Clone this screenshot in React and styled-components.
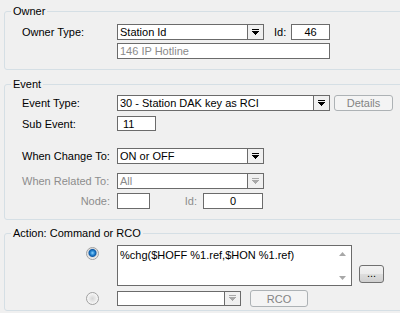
import React from "react";
import styled, { createGlobalStyle } from "styled-components";

const GlobalStyle = createGlobalStyle`
  html, body {
    margin: 0;
    padding: 0;
    background: #f0f0f0;
    overflow: hidden;
  }
  body {
    font-family: "Liberation Sans", Arial, sans-serif;
    font-size: 11px;
    color: #000;
  }
`;

const Page = styled.div`
  width: 400px;
  height: 313px;
  overflow: hidden;
  padding: 4px 0 0 4px;
  box-sizing: border-box;
  display: flex;
  flex-direction: column;
`;

const Group = styled.fieldset`
  margin: ${(p) => p.$top || 0}px 0 0 0;
  padding: 0;
  border: 1px solid #d5dfe5;
  border-radius: 3px;
  width: 430px;
  box-sizing: border-box;
  min-width: 0;
  flex: none;
`;

const Legend = styled.legend`
  margin-left: 6px;
  padding: 0 2px;
  height: 14px;
  line-height: 14px;
`;

const Body = styled.div`
  padding: ${(p) => p.$pad};
  display: flex;
  flex-direction: column;
`;

const Row = styled.div`
  display: flex;
  align-items: ${(p) => p.$align || "center"};
  height: ${(p) => p.$h || 16}px;
  margin-top: ${(p) => p.$mt || 0}px;
`;

const Label = styled.div`
  width: 95px;
  flex: none;
  box-sizing: border-box;
  color: ${(p) => (p.$disabled ? "#8d8d8d" : "#000")};
  text-align: ${(p) => (p.$right ? "right" : "left")};
  padding-right: ${(p) => (p.$right ? 7 : 0)}px;
  white-space: nowrap;
`;

const InlineLabel = styled.div`
  width: ${(p) => p.$w}px;
  flex: none;
  box-sizing: border-box;
  padding-left: ${(p) => p.$pl || 0}px;
  padding-right: ${(p) => p.$pr || 0}px;
  text-align: ${(p) => (p.$right ? "right" : "left")};
  color: ${(p) => (p.$disabled ? "#8d8d8d" : "#000")};
  white-space: nowrap;
`;

const TextBox = styled.div`
  width: ${(p) => p.$w}px;
  height: ${(p) => p.$h || 16}px;
  flex: none;
  box-sizing: border-box;
  border: 1px solid #6b6b6b;
  background: #fff;
  padding: 0 ${(p) => (p.$center ? 0 : 2)}px;
  display: flex;
  align-items: center;
  justify-content: ${(p) => (p.$center ? "center" : "flex-start")};
  color: ${(p) => (p.$disabled ? "#8a8a8a" : "#000")};
  white-space: nowrap;
  overflow: hidden;
`;

const Combo = styled.div`
  width: ${(p) => p.$w}px;
  height: ${(p) => p.$h || 16}px;
  flex: none;
  box-sizing: border-box;
  border: 1px solid #6b6b6b;
  background: #fff;
  display: flex;
`;

const ComboText = styled.div`
  flex: 1;
  padding-left: 2px;
  display: flex;
  align-items: center;
  color: ${(p) => (p.$disabled ? "#8a8a8a" : "#000")};
  white-space: nowrap;
  overflow: hidden;
`;

const ComboButton = styled.div`
  width: 15px;
  flex: none;
  border-left: 1px solid #6b6b6b;
  background: #f0f0f0;
  display: flex;
  align-items: center;
  justify-content: center;
`;

const PushButton = styled.div`
  width: ${(p) => p.$w}px;
  height: ${(p) => p.$h || 16}px;
  flex: none;
  box-sizing: border-box;
  margin-left: ${(p) => p.$ml || 0}px;
  border: 1px solid #adb2b5;
  border-radius: 3px;
  background: #f4f4f4;
  color: #838383;
  display: flex;
  align-items: center;
  justify-content: center;
`;

const DotsButton = styled.div`
  width: 25px;
  height: 18px;
  flex: none;
  box-sizing: border-box;
  margin: 0 0 3px 7px;
  align-self: flex-end;
  border: 1px solid #707070;
  border-radius: 3px;
  background: linear-gradient(#f2f2f2 0%, #ebebeb 50%, #dddddd 51%, #cfcfcf 100%);
  display: flex;
  align-items: center;
  justify-content: center;
  padding-bottom: 3px;
`;

const RadioCell = styled.div`
  width: 95px;
  flex: none;
  display: flex;
  justify-content: flex-end;
  padding-right: 18px;
  padding-top: ${(p) => p.$pt || 0}px;
  box-sizing: border-box;
`;

const Radio = styled.div`
  width: 13px;
  height: 13px;
  box-sizing: border-box;
  border-radius: 50%;
  border: 1px solid #a0a0a0;
  background: ${(p) =>
    p.$checked
      ? "radial-gradient(circle at 50% 45%, #8fd3ff 0, #2a8ad4 2px, #0d5aa8 3.5px, #dcdcdc 4.5px, #f4f4f4 6px)"
      : "radial-gradient(circle, #d6d6d6 0, #eeeeee 4px, #fbfbfb 6px)"};
`;

const Memo = styled.div`
  width: 235px;
  height: 41px;
  flex: none;
  box-sizing: border-box;
  border: 1px solid #6b6b6b;
  background: #fff;
  display: flex;
`;

const MemoText = styled.div`
  flex: 1;
  padding: 3px 0 0 2px;
  white-space: nowrap;
  overflow: hidden;
`;

const ScrollBar = styled.div`
  width: 17px;
  flex: none;
  display: flex;
  flex-direction: column;
  justify-content: space-between;
  align-items: center;
  padding: 6px 0 5px;
  box-sizing: border-box;
  background: #fff;
`;

function DownArrow({ color = "#000" }) {
  return (
    <svg width="7" height="7" viewBox="0 0 7 7" shapeRendering="crispEdges">
      <rect x="0" y="0" width="7" height="1" fill={color} />
      <rect x="0" y="2" width="7" height="1" fill={color} />
      <rect x="1" y="3" width="5" height="1" fill={color} />
      <rect x="2" y="4" width="3" height="1" fill={color} />
      <rect x="3" y="5" width="1" height="1" fill={color} />
    </svg>
  );
}

function SmallArrow({ up }) {
  return (
    <svg width="7" height="4" viewBox="0 0 7 4">
      <polygon points={up ? "0,4 7,4 3.5,0" : "0,0 7,0 3.5,4"} fill="#a8a8a8" />
    </svg>
  );
}

function Select({ w, h, value, disabled }) {
  return (
    <Combo $w={w} $h={h}>
      <ComboText $disabled={disabled}>{value}</ComboText>
      <ComboButton>
        <DownArrow color={disabled ? "#a8a8a8" : "#000"} />
      </ComboButton>
    </Combo>
  );
}

export default function App() {
  return (
    <>
      <GlobalStyle />
      <Page>
        <Group>
          <Legend>Owner</Legend>
          <Body $pad="6px 0 10px 17px">
            <Row>
              <Label>Owner Type:</Label>
              <Select w={147} value="Station Id" />
              <InlineLabel $w={27} $pl={10}>Id:</InlineLabel>
              <TextBox $w={39} $center>46</TextBox>
            </Row>
            <Row $mt={3}>
              <Label />
              <TextBox $w={213} $disabled>146 IP Hotline</TextBox>
            </Row>
          </Body>
        </Group>

        <Group $top={7}>
          <Legend>Event</Legend>
          <Body $pad="4px 0 10px 17px">
            <Row>
              <Label>Event Type:</Label>
              <Select w={213} value="30 - Station DAK key as RCI" />
              <PushButton $w={59} $ml={4}>Details</PushButton>
            </Row>
            <Row $mt={5} $h={15}>
              <Label>Sub Event:</Label>
              <TextBox $w={39} $h={15}>&nbsp;11</TextBox>
            </Row>
            <Row $mt={17}>
              <Label>When Change To:</Label>
              <Select w={147} value="ON or OFF" />
            </Row>
            <Row $mt={9}>
              <Label $disabled>When Related To:</Label>
              <Select w={147} value="All" disabled />
            </Row>
            <Row $mt={4}>
              <Label $disabled $right>Node:</Label>
              <TextBox $w={33} />
              <InlineLabel $w={53} $pr={6} $right $disabled>Id:</InlineLabel>
              <TextBox $w={60} $center>0</TextBox>
            </Row>
          </Body>
        </Group>

        <Group $top={6}>
          <Legend>Action: Command or RCO</Legend>
          <Body $pad="5px 0 3px 17px">
            <Row $h={41} $align="flex-start">
              <RadioCell $pt={2}>
                <Radio $checked />
              </RadioCell>
              <Memo>
                <MemoText>%chg($HOFF %1.ref,$HON %1.ref)</MemoText>
                <ScrollBar>
                  <SmallArrow up />
                  <SmallArrow />
                </ScrollBar>
              </Memo>
              <DotsButton>...</DotsButton>
            </Row>
            <Row $mt={4} $h={17}>
              <RadioCell>
                <Radio />
              </RadioCell>
              <Select w={124} h={15} value="" disabled />
              <PushButton $w={58} $h={17} $ml={9}>RCO</PushButton>
            </Row>
          </Body>
        </Group>
      </Page>
    </>
  );
}
